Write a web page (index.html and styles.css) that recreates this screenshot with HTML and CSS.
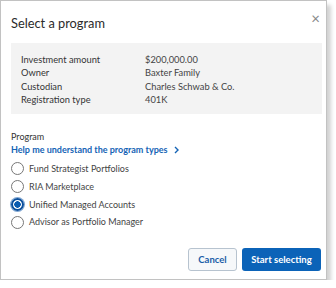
FILE: index.html
```html
<!DOCTYPE html>
<html lang="en">

<head>
    <meta charset="UTF-8">
    <title>Select a program</title>
    <link rel="stylesheet" href="styles.css">
</head>

<body>
    <div class="dialog">
        <div class="dialog-header">
            <div class="dialog-title">Select a program</div>
            <span class="close-btn">&times;</span>
        </div>

        <div class="summary">
            <div class="summary-row"><span class="summary-label">Investment amount</span><span>$200,000.00</span></div>
            <div class="summary-row"><span class="summary-label">Owner</span><span>Baxter Family</span></div>
            <div class="summary-row"><span class="summary-label">Custodian</span><span>Charles Schwab &amp; Co.</span></div>
            <div class="summary-row"><span class="summary-label">Registration type</span><span>401K</span></div>
        </div>

        <div class="program">
            <div class="program-label">Program</div>
            <a class="help-link" href="#">Help me understand the program types
                <svg width="7" height="8" viewBox="0 0 7 8"><path d="M2 1l3 3-3 3" fill="none" stroke="#1463b5" stroke-width="1.4"/></svg>
            </a>
            <div class="radio-list">
                <label class="radio"><span class="radio-dot"></span>Fund Strategist Portfolios</label>
                <label class="radio"><span class="radio-dot"></span>RIA Marketplace</label>
                <label class="radio checked"><span class="radio-dot"></span>Unified Managed Accounts</label>
                <label class="radio"><span class="radio-dot"></span>Advisor as Portfolio Manager</label>
            </div>
        </div>

        <div class="dialog-footer">
            <button class="btn btn-cancel">Cancel</button>
            <button class="btn btn-primary">Start selecting</button>
        </div>
    </div>
</body>

</html>
```

FILE: styles.css
```css
body {
    margin: 0;
    background-color: #fff;
    font-family: Lato, "Liberation Sans", sans-serif;
    color: #333;
}

.dialog {
    box-sizing: border-box;
    width: 327px;
    height: 280px;
    border: 1px solid #c2c2c2;
    background-color: #fff;
    box-shadow: 4px 5px 4px rgba(0, 0, 0, 0.18);
    display: flex;
    flex-direction: column;
}

.dialog-header {
    height: 42px;
    padding: 0 10px;
    display: flex;
    justify-content: space-between;
    align-items: center;
}

.dialog-title {
    font-size: 12.8px;
    color: #2b2b2b;
    margin-top: 1px;
}

.close-btn {
    font-size: 15px;
    color: #888;
    margin-top: -8px;
    margin-right: -4px;
}

.summary {
    margin: 0 4px 0 10px;
    padding: 10px 10px 8px;
    background-color: #f3f3f3;
    font-size: 9.3px;
    line-height: 13.3px;
}

.summary-row {
    display: flex;
}

.summary-label {
    width: 124px;
    color: #333;
}

.summary-row span:last-child {
    color: #444;
}

.program {
    padding: 0 10px;
    margin-top: 16px;
    font-size: 9px;
    line-height: 13.3px;
}

.help-link {
    display: flex;
    align-items: center;
    gap: 5px;
    color: #1463b5;
    font-weight: bold;
    text-decoration: none;
}

.radio-list {
    margin-top: 3px;
}

.radio {
    display: flex;
    align-items: center;
    height: 17.8px;
    color: #444;
}

.radio-dot {
    box-sizing: border-box;
    width: 13px;
    height: 13px;
    border: 1px solid #777;
    border-radius: 50%;
    margin-right: 5px;
    background-color: #fff;
}

.radio.checked .radio-dot {
    border: 2px solid #0b4f9c;
    box-shadow: 0 0 0 1px #7fa6d3;
    background: radial-gradient(circle, #0b5cb0 0 3px, #fff 3.5px);
}

.dialog-footer {
    margin-top: auto;
    padding: 0 5px 8px 0;
    display: flex;
    justify-content: flex-end;
    gap: 5px;
}

.btn {
    font-family: Lato, "Liberation Sans", sans-serif;
    font-size: 9.5px;
    font-weight: bold;
    height: 23px;
    border-radius: 3px;
    cursor: pointer;
}

.btn-cancel {
    width: 49px;
    border: 1px solid #b7c3cf;
    background-color: #f6f8fa;
    color: #1a5ea8;
}

.btn-primary {
    width: 79px;
    border: none;
    background-color: #0b63b8;
    color: #fff;
}
```
